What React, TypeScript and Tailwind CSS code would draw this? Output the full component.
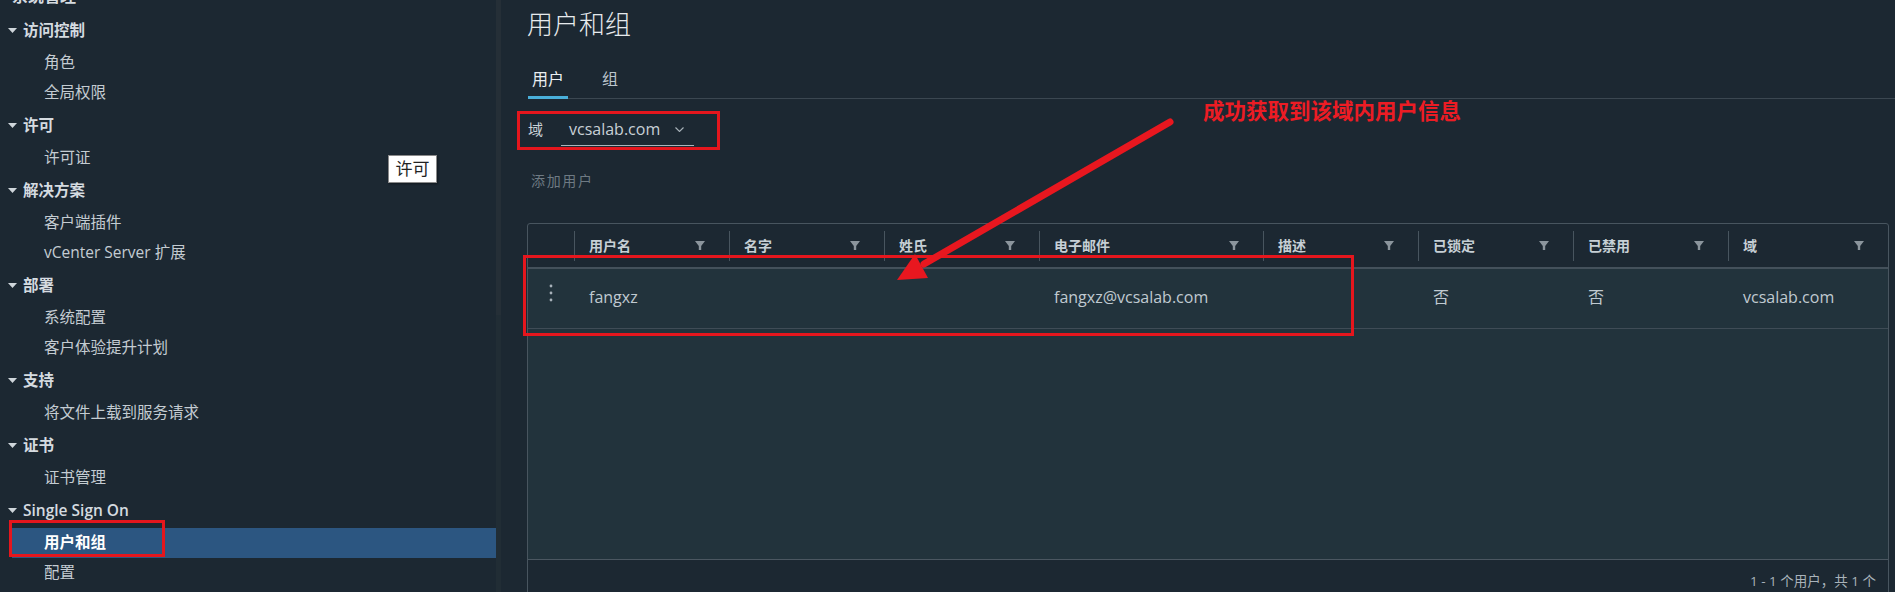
import React from 'react';

const nav = [
  { title: '访问控制', items: ['角色', '全局权限'] },
  { title: '许可', items: ['许可证'] },
  { title: '解决方案', items: ['客户端插件', 'vCenter Server 扩展'] },
  { title: '部署', items: ['系统配置', '客户体验提升计划'] },
  { title: '支持', items: ['将文件上载到服务请求'] },
  { title: '证书', items: ['证书管理'] },
  { title: 'Single Sign On', items: ['用户和组', '配置'] },
];

const columns = [
  { label: '用户名', w: 'w-[155px]' },
  { label: '名字', w: 'w-[155px]' },
  { label: '姓氏', w: 'w-[155px]' },
  { label: '电子邮件', w: 'w-[224px]' },
  { label: '描述', w: 'w-[155px]' },
  { label: '已锁定', w: 'w-[155px]' },
  { label: '已禁用', w: 'w-[155px]' },
  { label: '域', w: 'flex-1' },
];

const row = ['fangxz', '', '', 'fangxz@vcsalab.com', '', '否', '否', 'vcsalab.com'];

function Caret() {
  return (
    <svg width="9" height="5" viewBox="0 0 9 5" className="shrink-0">
      <polygon points="0,0 9,0 4.5,5" fill="#cfd6db" />
    </svg>
  );
}

function Funnel() {
  return (
    <svg width="10" height="9" viewBox="0 0 10 9" className="shrink-0">
      <path d="M0 0 H10 L6.2 5 V9 H3.8 V5 Z" fill="#8b959d" />
    </svg>
  );
}

function Sidebar() {
  return (
    <aside className="w-[496px] shrink-0 flex flex-col">
      <div className="shrink-0 -mt-[14px] h-[27px] pl-[12px] leading-[20px] text-[16px] font-semibold text-[#d5dbe0]">
        系统管理
      </div>
      {nav.map((g) => (
        <div key={g.title} className="shrink-0 flex flex-col">
          <div className="h-[35px] flex items-center pl-[8px] gap-[6px] text-[15.5px] font-semibold text-[#d5dbe0]">
            <Caret />
            <span>{g.title}</span>
          </div>
          {g.items.map((it) => {
            const active = it === '用户和组';
            return (
              <div
                key={it}
                className={
                  active
                    ? 'h-[30px] ml-[12px] pl-[32px] flex items-center text-[15.5px] font-bold text-white bg-[#2c5681]'
                    : 'h-[30px] ml-[12px] pl-[32px] flex items-center text-[15.5px] text-[#c4ccd2]'
                }
              >
                {it}
              </div>
            );
          })}
        </div>
      ))}
    </aside>
  );
}

function UsersTable() {
  return (
    <div className="shrink-0 mt-[26px] flex flex-col border border-[#48555f] rounded-[3px]">
      <div className="shrink-0 h-[45px] flex border-b-2 border-[#44515b]">
        <div className="w-[46px] shrink-0" />
        {columns.map((c) => (
          <div key={c.label} className={`${c.w} shrink-0 flex items-center`}>
            <div className="w-px h-[30px] bg-[#48555f]" />
            <div className="flex-1 flex items-center justify-between pl-[14px] pr-[24px] text-[14px] font-semibold text-[#c6cfd5]">
              <span>{c.label}</span>
              <Funnel />
            </div>
          </div>
        ))}
      </div>
      <div className="shrink-0 h-[290px] bg-[#22333c]">
        <div className="h-[60px] flex items-center pb-[3px] border-b border-[#3f4c56]">
          <div className="w-[46px] shrink-0 flex justify-center -mt-[8px]">
            <svg width="4" height="18" viewBox="0 0 4 18">
              <circle cx="2" cy="2" r="1.4" fill="#a7b1b9" />
              <circle cx="2" cy="9" r="1.4" fill="#a7b1b9" />
              <circle cx="2" cy="16" r="1.4" fill="#a7b1b9" />
            </svg>
          </div>
          {columns.map((c, i) => (
            <div key={c.label} className={`${c.w} shrink-0 pl-[15px] text-[16px] text-[#c0cad1]`}>
              {row[i]}
            </div>
          ))}
        </div>
      </div>
      <div className="shrink-0 h-[41px] border-t border-[#4b5761] pt-[14px] pr-[12px] text-right leading-[14px] text-[13.5px] text-[#a9b3ba]">
        1 - 1 个用户，共 1 个
      </div>
    </div>
  );
}

export default function App() {
  return (
    <div className="relative flex h-[592px] w-[1895px] overflow-hidden bg-[#1c2832] font-['Open_Sans','Noto_Sans_CJK_SC',sans-serif]">
      <Sidebar />
      <div className="w-[5px] shrink-0 bg-[#212d35]">
        <div className="h-[315px] bg-[#252f37]" />
      </div>
      <main className="flex-1 flex flex-col pl-[26px] pr-[6px] overflow-hidden">
        <h1 className="shrink-0 h-[48px] flex items-center text-[26px] font-light text-[#e6eaed]">用户和组</h1>
        <div className="shrink-0 flex gap-[30px] ml-px -mr-[6px] border-b border-[#3b4751]">
          <button className="-mb-px pt-[21px] pb-[7px] px-[4px] leading-[20px] text-[16px] text-[#eaeef1] border-b-[3px] border-[#49afd9]">
            用户
          </button>
          <button className="-mb-px pt-[21px] pb-[7px] px-[4px] leading-[20px] text-[16px] text-[#bcc6cd] border-b-[3px] border-transparent">
            组
          </button>
        </div>
        <div className="shrink-0 mt-[14px] h-[33px] flex items-center ml-px gap-[18px] text-[15px] text-[#c8d0d6]">
          <span>域</span>
          <div className="h-[33px] w-[133px] flex items-center justify-between pl-[8px] pr-[10px] border-b border-[#aab4bb] text-[16px]">
            <span>vcsalab.com</span>
            <svg width="9" height="5" viewBox="0 0 9 5">
              <polyline points="0.5,0.5 4.5,4.5 8.5,0.5" fill="none" stroke="#a9b3ba" strokeWidth="1.1" />
            </svg>
          </div>
        </div>
        <div className="shrink-0 mt-[17px] h-[34px] flex items-center ml-[4px] text-[14px] tracking-[0.12em] text-[#6e7a83]">
          添加用户
        </div>
        <UsersTable />
      </main>

      {/* annotations drawn over the screenshot */}
      <div className="absolute left-[388px] top-[155px] w-[49px] h-[28px] bg-white border border-[#8a8a8a] shadow-[1px_1px_2px_rgba(0,0,0,0.4)] flex items-center justify-center text-[17px] text-[#222]">
        许可
      </div>
      <div className="absolute left-[9px] top-[520px] w-[156px] h-[37px] border-[3px] border-[#e5161d]" />
      <div className="absolute left-[517px] top-[111px] w-[203px] h-[39px] border-[3px] border-[#e5161d]" />
      <div className="absolute left-[523px] top-[255px] w-[831px] h-[81px] border-[3px] border-[#e5161d]" />
      <div className="absolute left-[1203px] top-[99px] text-[21.5px] leading-[24px] font-bold text-[#ec1c24]">
        成功获取到该域内用户信息
      </div>
      <svg className="absolute left-0 top-0 pointer-events-none" width="1895" height="592">
        <line x1="1170" y1="122" x2="924" y2="264" stroke="#e8171f" strokeWidth="7" strokeLinecap="round" />
        <polygon points="897,280 928,278 915,254" fill="#e8171f" />
      </svg>
    </div>
  );
}
